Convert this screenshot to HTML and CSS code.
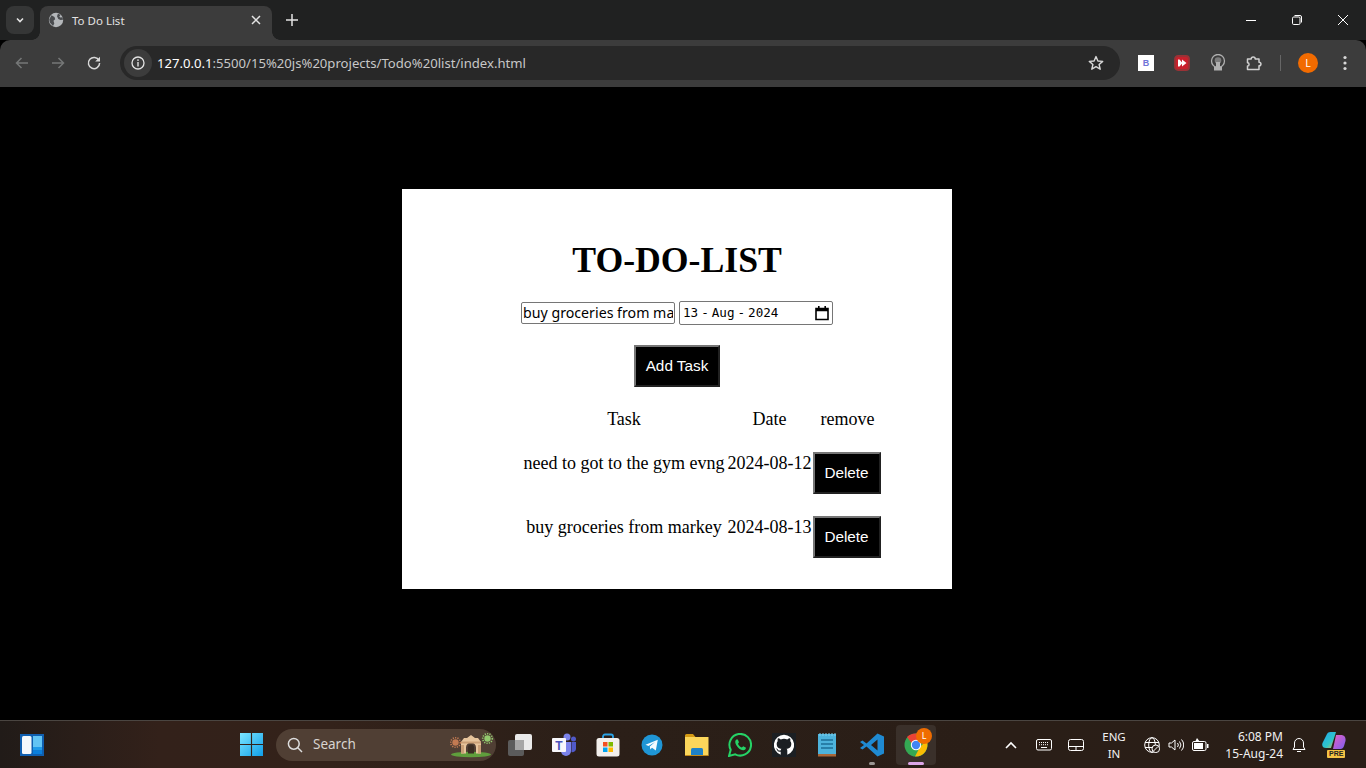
FILE: index.html
```html
<!DOCTYPE html>
<html lang="en">
<head>
<meta charset="utf-8">
<title>To Do List</title>
<link rel="stylesheet" href="styles.css">
</head>
<body>
<div class="browser">
  <header class="tabstrip">
    <button class="tab-menu" aria-label="Tabs"><svg width="10" height="10" viewBox="0 0 10 10"><path d="M2 3.500 5 6.500 8 3.500" fill="none" stroke="#e3e3e3" stroke-width="1.600"/></svg></button>
    <div class="tab">
      <svg class="favicon" width="16" height="16" viewBox="0 0 16 16"><circle cx="8" cy="8" r="7.200" fill="#b4b7ba"/><path d="M3.500 3.200 6.500 5 7.200 7.300 5.500 8.800 6.300 11.500 5 14 1.800 10.500 1.200 7.500ZM10 1.500 12.500 3 11.300 4.800 12.500 5.600 14.500 5.300 15 7.800 12.500 8 10.300 7 9 4.300Z" fill="#4a4c4f"/></svg>
      <span class="tab-title">To Do List</span>
      <svg class="tab-close" width="10" height="10" viewBox="0 0 10 10"><path d="M1 1 9 9M9 1 1 9" stroke="#e3e3e3" stroke-width="1.500"/></svg>
    </div>
    <svg class="new-tab" width="12" height="12" viewBox="0 0 12 12"><path d="M6 0V12M0 6H12" stroke="#e3e3e3" stroke-width="1.500"/></svg>
    <div class="win-controls">
      <svg width="10" height="10" viewBox="0 0 10 10"><path d="M0 5.500H10" stroke="#fff"/></svg>
      <svg width="10" height="10" viewBox="0 0 10 10"><rect x=".5" y="2" width="7.500" height="7.500" rx="1.200" fill="none" stroke="#fff"/><path d="M2.500 .5H8A1.500 1.500 0 0 1 9.500 2V7.500" fill="none" stroke="#fff"/></svg>
      <svg width="10" height="10" viewBox="0 0 10 10"><path d="M0 0 10 10M10 0 0 10" stroke="#fff"/></svg>
    </div>
  </header>
  <nav class="toolbar">
    <svg class="nav-icon" width="16" height="16" viewBox="0 0 16 16"><path d="M14 8H2.500M7.500 3 2.500 8 7.500 13" fill="none" stroke="#757777" stroke-width="1.500"/></svg>
    <svg class="nav-icon" width="16" height="16" viewBox="0 0 16 16"><path d="M2 8H13.500M8.500 3 13.500 8 8.500 13" fill="none" stroke="#757777" stroke-width="1.500"/></svg>
    <svg class="nav-icon" width="16" height="16" viewBox="0 0 16 16"><path d="M13 5.500A5.600 5.600 0 1 0 13.600 8" fill="none" stroke="#d8d8d8" stroke-width="1.500"/><path d="M14 1.800V6.600H9.200Z" fill="#d8d8d8"/></svg>
    <div class="omnibox">
      <span class="info-chip"><svg width="14" height="14" viewBox="0 0 14 14"><circle cx="7" cy="7" r="6" fill="none" stroke="#e3e3e3" stroke-width="1.300"/><path d="M7 6V10.400" stroke="#e3e3e3" stroke-width="1.400"/><circle cx="7" cy="4.100" r=".9" fill="#e3e3e3"/></svg></span>
      <span class="url"><span class="url-host">127.0.0.1</span>:5500/15%20js%20projects/Todo%20list/index.html</span>
      <svg class="star" width="16" height="16" viewBox="0 0 16 16"><path d="M8 1.600 9.900 6 14.700 6.400 11.100 9.500 12.200 14.200 8 11.700 3.800 14.200 4.900 9.500 1.300 6.400 6.100 6Z" fill="none" stroke="#d8d8d8" stroke-width="1.400" stroke-linejoin="round"/></svg>
    </div>
    <div class="ext-b"><span>B</span></div>
    <svg class="ext ext-red" width="16" height="16" viewBox="0 0 16 16"><rect x="1" y="1" width="14" height="14" rx="3" fill="#c9202c" stroke="#9a3236" stroke-width="1.800"/><path d="M4 4.500H5.500L8.500 8 5.500 11.500H4ZM8 4.500 12.500 8 8 11.500Z" fill="#fff"/></svg>
    <svg class="ext ext-bulb" width="16" height="18" viewBox="0 0 16 18"><circle cx="8" cy="7" r="6.500" fill="none" stroke="#b0b0b0" stroke-width="1.300"/><circle cx="8" cy="6.500" r="3.300" fill="#7c7c7c"/><path d="M6 8H10V12.500H12V16.500H4V12.500H6Z" fill="#b0b0b0"/></svg>
    <svg class="ext ext-puzzle" width="18" height="18" viewBox="0 0 18 18"><path d="M2.500 5H6.200C6.200 2.300 10.200 2.300 10.200 5H14V8.200C16.600 8.200 16.600 11.800 14 11.800V15.500H2.500V12C4.600 12 4.600 8.800 2.500 8.800Z" fill="none" stroke="#d0d0d0" stroke-width="1.500" stroke-linejoin="round"/></svg>
    <span class="tool-sep"></span>
    <span class="avatar">L</span>
    <svg class="dots" width="4" height="16" viewBox="0 0 4 16"><circle cx="2" cy="2.500" r="1.600" fill="#d8d8d8"/><circle cx="2" cy="8" r="1.600" fill="#d8d8d8"/><circle cx="2" cy="13.500" r="1.600" fill="#d8d8d8"/></svg>
  </nav>
  <main class="viewport">
    <section class="card">
      <h1>TO-DO-LIST</h1>
      <div class="inputs">
        <input class="task-input" type="text" value="buy groceries from markey">
        <div class="date-input"><span class="date-text"><span>13</span><i>-</i><span>Aug</span><i>-</i><span>2024</span></span>
          <svg width="14" height="16" viewBox="0 0 14 16"><path d="M1 3.500H13V14.500H1Z" fill="none" stroke="#000" stroke-width="1.600"/><path d="M1 3H13V6.300H1ZM3 1H4.600V3H3ZM9.400 1H11V3H9.400Z" fill="#000"/></svg>
        </div>
      </div>
      <button class="btn add-btn">Add Task</button>
      <table>
        <thead><tr><th>Task</th><th>Date</th><th>remove</th></tr></thead>
        <tbody>
          <tr><td>need to got to the gym evng</td><td>2024-08-12</td><td><button class="btn del-btn">Delete</button></td></tr>
          <tr><td>buy groceries from markey</td><td>2024-08-13</td><td><button class="btn del-btn">Delete</button></td></tr>
        </tbody>
      </table>
    </section>
  </main>
  <footer class="taskbar">
    <div class="tb-left">
      <svg width="26" height="24" viewBox="0 0 26 24"><rect x="1" y="1" width="24" height="22" fill="#0f5fb0"/><rect x="3" y="3" width="9.500" height="18" rx="1.500" fill="#f4f8fb"/><rect x="14" y="3" width="9" height="11" fill="#62c4f4"/><rect x="14" y="14" width="9" height="3.500" fill="#1f9bea"/><rect x="14" y="17.500" width="9" height="3.500" fill="#0a7fdc"/></svg>
    </div>
    <div class="tb-center">
      <svg class="win-logo" width="23" height="23" viewBox="0 0 24 24"><defs><linearGradient id="w" x1="0" y1="0" x2="1" y2="1"><stop offset="0" stop-color="#7ce6ff"/><stop offset="1" stop-color="#0f9ee8"/></linearGradient></defs><path d="M0 0H11.400V11.400H0ZM12.600 0H24V11.400H12.600ZM0 12.600H11.400V24H0ZM12.600 12.600H24V24H12.600Z" fill="url(#w)"/></svg>
      <div class="search">
        <svg width="16" height="16" viewBox="0 0 16 16"><circle cx="6.800" cy="6.800" r="5.400" fill="none" stroke="#ddd" stroke-width="1.500"/><path d="M10.800 10.800 15 15" stroke="#ddd" stroke-width="1.500"/></svg>
        <span class="search-label">Search</span>
        <svg class="gate" width="44" height="26" viewBox="0 0 44 26"><ellipse cx="21" cy="22.500" rx="20" ry="2.800" fill="#5f9e3c"/><path d="M11 10 14 6H17L21 3 25 6H28L31 10V21.500H26V15.500A5 5 0 0 0 16 15.500V21.500H11Z" fill="#e6c49c"/><path d="M11 9.500H31V11.500H11ZM11 13H14V21.500H11ZM28 13H31V21.500H28Z" fill="#c99f76"/><path d="M18 21.500V15.500A3 3 0 0 1 24 15.500V21.500Z" fill="#3a2c22"/><circle cx="5.500" cy="10.500" r="3.200" fill="#c37a52"/><circle cx="5.500" cy="10.500" r="4.800" fill="none" stroke="#c37a52" stroke-width="1.600" stroke-dasharray="1.200 1.200"/><circle cx="37.500" cy="6.500" r="3.200" fill="#92c96e"/><circle cx="37.500" cy="6.500" r="4.800" fill="none" stroke="#92c96e" stroke-width="1.600" stroke-dasharray="1.200 1.200"/></svg>
      </div>
      <div class="apps">
        <span class="app"><svg width="24" height="22" viewBox="0 0 24 22"><rect x="0" y="6" width="16" height="16" rx="2" fill="#5b5b5b"/><rect x="7" y="0" width="17" height="16" rx="2" fill="#e9e9e9"/><rect x="7" y="6" width="9" height="10" fill="#a5a5a5"/></svg></span>
        <span class="app"><svg width="26" height="24" viewBox="0 0 26 24"><circle cx="16" cy="4" r="3.500" fill="#7b83eb"/><circle cx="22.500" cy="6" r="2.500" fill="#5059c9"/><path d="M10 9H20V18A5 5 0 0 1 10 18Z" fill="#7b83eb"/><path d="M20.500 9H25V16A3.500 3.500 0 0 1 20.500 19Z" fill="#5059c9"/><rect x="1" y="5" width="14" height="14" rx="1" fill="#f7f7fb"/><text class="teams-t" x="8" y="16.500" text-anchor="middle">T</text></svg></span>
        <span class="app"><svg width="24" height="24" viewBox="0 0 24 24"><path d="M7 6V3.500A2 2 0 0 1 9 1.500H15A2 2 0 0 1 17 3.500V6" fill="none" stroke="#2aa4e8" stroke-width="1.800"/><rect x="0.500" y="5" width="23" height="18.500" rx="2.500" fill="#f2efec"/><rect x="7" y="9" width="4.500" height="4.500" fill="#f25022"/><rect x="12.500" y="9" width="4.500" height="4.500" fill="#7fba00"/><rect x="7" y="14.500" width="4.500" height="4.500" fill="#00a4ef"/><rect x="12.500" y="14.500" width="4.500" height="4.500" fill="#ffb900"/></svg></span>
        <span class="app"><svg width="22" height="22" viewBox="0 0 22 22"><circle cx="11" cy="11" r="10.500" fill="#1f96d6"/><path d="M4.500 10.800 16.800 5.800 14.800 16.500 11 13.800 9.300 15.500 8.800 12.600 14 8 7.500 11.900Z" fill="#f5fbff"/></svg></span>
        <span class="app"><svg width="25" height="22" viewBox="0 0 25 22"><path d="M1 1.500A1.500 1.500 0 0 1 2.500 0H9L11.500 3H1Z" fill="#d49a14"/><path d="M1 3H24.500V21A1 1 0 0 1 23.500 22H1Z" fill="#fbd65b"/><rect x="7" y="14" width="12" height="8" rx="1.500" fill="#1e82c8"/><rect x="1" y="21" width="23.500" height="1" fill="#c48a18"/></svg></span>
        <span class="app"><svg width="24" height="24" viewBox="0 0 24 24"><path d="M1 23 2.700 16.800A10.800 10.800 0 1 1 7.200 21.300Z" fill="none" stroke="#25d366" stroke-width="2"/><path d="M8.300 6.500C7 7.500 6.800 9.500 8.200 12 9.800 15 12.500 17 15 17.300 16.800 17.500 18 16 18 14.800L15.300 13.300 13.800 14.500C12.300 14 10.500 12.200 10 10.700L11 9.300 9.800 6.500Z" fill="#25d366"/></svg></span>
        <span class="app"><svg width="24" height="24" viewBox="0 0 24 24"><rect width="24" height="24" fill="#1b1f23"/><path d="M12 1.800A10.300 10.300 0 0 0 8.700 21.800V18.700C6 19.300 5.400 17.500 5.400 17.500 4.900 16.300 4.200 16 4.200 16 3.300 15.400 4.300 15.400 4.300 15.400 5.300 15.500 5.800 16.400 5.800 16.400 6.700 18 8.200 17.500 8.800 17.200 8.900 16.500 9.200 16.100 9.400 15.800 7.100 15.600 4.700 14.700 4.700 10.800 4.700 9.700 5.100 8.800 5.800 8.100 5.700 7.800 5.300 6.800 5.900 5.400 5.900 5.400 6.800 5.100 8.700 6.400A10 10 0 0 1 15.300 6.400C17.200 5.100 18.100 5.400 18.100 5.400 18.700 6.800 18.300 7.800 18.200 8.100 18.900 8.800 19.300 9.700 19.300 10.800 19.300 14.700 16.900 15.600 14.600 15.800 15 16.100 15.300 16.700 15.300 17.700V21.800A10.300 10.300 0 0 0 12 1.800Z" fill="#fff"/></svg></span>
        <span class="app"><svg width="20" height="24" viewBox="0 0 20 24"><rect x="0" y="1" width="18" height="22" fill="#4db3dc"/><rect x="0" y="21" width="18" height="2.500" fill="#a8683a"/><path d="M3 7H15M3 11H15M3 15H15" stroke="#1c6f97" stroke-width="1.500"/><path d="M2 0V3M5 0V3M8 0V3M11 0V3M14 0V3M17 0V3" stroke="#7fd0ee"/></svg></span>
        <span class="app app-vscode"><svg width="24" height="24" viewBox="0 0 24 24"><path d="M17.500 0.500 24 3.500V20.500L17.500 23.500 6.500 13.500 2.500 16.500 0 15 4 12 0 9 2.500 7.500 6.500 10.500ZM17.500 6.500 11 12 17.500 17.500Z" fill="#1f8ad2"/></svg><span class="running"></span></span>
        <span class="app app-chrome"><svg width="24" height="24" viewBox="0 0 24 24"><circle cx="12" cy="12" r="11.500" fill="#34a853"/><path d="M12 .5A11.500 11.500 0 0 1 22.500 7.500H12A4.500 4.500 0 0 0 7.800 10.500L3 4A11.500 11.500 0 0 1 12 .5Z" fill="#ea4335"/><path d="M22.500 7.500A11.500 11.500 0 0 1 11 23.500L16 14Z" fill="#fbbc04"/><circle cx="12" cy="12" r="5.200" fill="#fff"/><circle cx="12" cy="12" r="4.200" fill="#4285f4"/></svg><span class="chrome-badge">L</span><span class="active-bar"></span></span>
      </div>
    </div>
    <div class="tray">
      <svg class="t-chev" width="12" height="8" viewBox="0 0 12 8"><path d="M1 7 6 2 11 7" fill="none" stroke="#fff" stroke-width="1.600"/></svg>
      <svg class="t-key" width="16" height="12" viewBox="0 0 16 12"><rect x=".5" y=".5" width="15" height="10.500" rx="1.500" fill="none" stroke="#fff"/><path d="M3 3.500H13M3 5.700H13" stroke="#fff" stroke-dasharray="1 1"/><path d="M5 8.500H11" stroke="#fff"/></svg>
      <svg class="t-pad" width="16" height="12" viewBox="0 0 16 12"><rect x=".5" y=".5" width="15" height="11" rx="2" fill="none" stroke="#fff"/><path d="M.5 7.500H15.500M8 7.500V11.500" stroke="#fff"/></svg>
      <div class="t-lang">ENG<br>IN</div>
      <svg class="t-globe" width="16" height="16" viewBox="0 0 16 16"><circle cx="8" cy="8" r="7.300" fill="none" stroke="#fff"/><ellipse cx="8" cy="8" rx="3.300" ry="7.300" fill="none" stroke="#fff"/><path d="M1 5.500H15M1 10.500H10" stroke="#fff"/><circle cx="11.800" cy="11.800" r="3.800" fill="#2a1e17" stroke="#fff"/><path d="M9.500 14 14 9.500" stroke="#fff"/></svg>
      <svg class="t-vol" width="16" height="14" viewBox="0 0 16 14"><path d="M1 5H3.500L7 2V12L3.500 9H1Z" fill="none" stroke="#fff"/><path d="M9.500 5A3 3 0 0 1 9.500 9M11.500 3.500A5.500 5.500 0 0 1 11.500 10.500M13.500 1.500A8 8 0 0 1 13.500 12.500" fill="none" stroke="#fff"/></svg>
      <svg class="t-bat" width="17" height="14" viewBox="0 0 17 14"><rect x=".5" y="3.500" width="13.500" height="9" rx="1.500" fill="none" stroke="#fff"/><rect x="15" y="6" width="1.500" height="4" fill="#fff"/><rect x="2" y="5" width="9" height="6" fill="#fff"/><path d="M5 0 3 4H8Z" fill="#fff"/></svg>
      <div class="t-clock"><div>6:08 PM</div><div>15-Aug-24</div></div>
      <svg class="t-bell" width="14" height="16" viewBox="0 0 14 16"><path d="M1 12.500H13L11.500 10V6A4.500 4.500 0 0 0 2.500 6V10Z" fill="none" stroke="#fff" stroke-linejoin="round"/><path d="M5 14.500H9" stroke="#fff"/></svg>
      <div class="copilot"><svg width="24" height="20" viewBox="0 0 24 20"><defs><linearGradient id="c" x1="0" y1="0" x2="1" y2="1"><stop offset="0" stop-color="#1fa8f0"/><stop offset=".6" stop-color="#2fc4c8"/><stop offset="1" stop-color="#e8b840"/></linearGradient><linearGradient id="d" x1="0" y1="0" x2="1" y2="1"><stop offset="0" stop-color="#e85fc0"/><stop offset="1" stop-color="#7a5ff0"/></linearGradient></defs><path d="M5 2C6 0 8 0 10 0H14L9 16H4C1 16-.5 14 .5 11Z" fill="url(#c)"/><path d="M14 3H19C22 3 24 5 23.500 9L22 14C21 17 19 17 17 17H11Z" fill="url(#d)"/></svg><span class="pre">PRE</span></div>
    </div>
  </footer>
</div>
</body>
</html>
```

FILE: styles.css
```css
* { box-sizing: border-box; }
html, body { margin: 0; padding: 0; height: 100%; }
body { overflow: hidden; background: #000; }
.browser { width: 1366px; height: 768px; display: flex; flex-direction: column; font-family: "Noto Sans", sans-serif; }

.tabstrip { height: 40px; background: #202121; display: flex; align-items: flex-start; padding-top: 6px; flex: none; }
.tab-menu { width: 28px; height: 28px; margin-left: 6px; border: 0; padding: 0; border-radius: 8px; background: #353636; display: flex; align-items: center; justify-content: center; }
.tab { width: 232px; height: 34px; margin-left: 6px; background: #3c3c3c; border-radius: 8px 8px 0 0; display: flex; align-items: center; padding: 0 11px 6px 8px; position: relative; }
.tab::before, .tab::after { content: ""; position: absolute; bottom: 0; width: 8px; height: 8px; }
.tab::before { left: -8px; background: radial-gradient(circle at 0 0, #202121 7.500px, #3c3c3c 8px); }
.tab::after { right: -8px; background: radial-gradient(circle at 100% 0, #202121 7.500px, #3c3c3c 8px); }
.favicon { flex: none; }
.tab-title { font-size: 11.500px; color: #e3e3e3; margin-left: 8px; flex: 1; white-space: nowrap; }
.tab-close { flex: none; }
.new-tab { margin: 8px 0 0 14px; }
.win-controls { margin-left: auto; display: flex; gap: 36px; padding: 9px 18px 0 0; height: 30px; }

.toolbar { height: 47px; background: #3c3c3c; border-radius: 10px 10px 0 0; display: flex; align-items: center; padding: 0 14px 1px 14px; flex: none; position: relative; }
.nav-icon { margin-right: 20px; flex: none; }
.omnibox { width: 1000px; height: 34px; margin-left: -2px; background: #282828; border-radius: 17px; display: flex; align-items: center; padding: 0 16px 0 4px; }
.info-chip { width: 28px; height: 28px; border-radius: 50%; background: #3c3c3c; display: flex; align-items: center; justify-content: center; flex: none; }
.url { font-size: 13.120px; color: #c7c7c7; margin-left: 5px; white-space: nowrap; flex: 1; }
.url-host { color: #fff; }
.star { flex: none; }
.ext-b { width: 16px; height: 16px; background: #fff; margin-left: 18px; display: flex; align-items: center; justify-content: center; flex: none; }
.ext-b span { font: bold 9px "Liberation Sans", sans-serif; color: #6f74d8; }
.ext { flex: none; }
.ext-red { margin-left: 20px; }
.ext-bulb { margin-left: 20px; }
.ext-puzzle { margin-left: 19px; }
.tool-sep { width: 1px; height: 16px; background: #666; margin-left: 17px; flex: none; }
.avatar { width: 20px; height: 20px; border-radius: 50%; background: #f26b00; color: #fff; font-size: 10.500px; display: flex; align-items: center; justify-content: center; margin-left: 17px; flex: none; }
.dots { margin-left: 25px; flex: none; }

.viewport { flex: 1; background: #000; padding: 102px 0 0 402px; min-height: 0; }
.card { width: 550px; height: 400px; background: #fff; display: flex; flex-direction: column; align-items: center; padding-top: 50px; font-family: "Liberation Serif", serif; }
h1 { margin: 0 0 20px; font-size: 35.700px; line-height: 42px; font-weight: bold; color: #000; }
.inputs { display: flex; align-items: center; gap: 4px; height: 24px; }
.task-input { width: 154px; height: 22px; padding: 0 1px 2px; border: 1px solid #767676; border-radius: 2px; font: 14.200px "Noto Sans", sans-serif; color: #000; background: #fff; outline: 0; }
.date-input { width: 154px; height: 24px; border: 1px solid #767676; border-radius: 2px; display: flex; align-items: center; justify-content: space-between; padding: 0 3px; }
.date-text { font: 12.600px "DejaVu Sans Mono", monospace; color: #000; display: flex; padding-bottom: 2px; }
.date-text i { font-style: normal; padding: 0 3px; }
.btn { background: #000; color: #fff; font: 15.300px "Liberation Sans", sans-serif; border: 2px outset #767676; padding: 0 0 1px; height: 42px; display: block; }
.add-btn { width: 86px; margin-top: 20px; }
.del-btn { width: 68px; margin: 20px 0 0 -1px; }
table { border-collapse: separate; border-spacing: 2px; margin: 20px 0 0 50px; font-size: 18px; color: #000; }
th { font-weight: normal; padding: 0 1px 2px; text-align: center; height: 21px; line-height: 18px; }
td { padding: 0; text-align: center; vertical-align: middle; white-space: nowrap; }
thead th:first-child { width: 203px; }
thead th:nth-child(2) { width: 84px; }
thead th:nth-child(3) { width: 68px; }

.taskbar { height: 48px; flex: none; border-top: 1px solid #4a4541; background: linear-gradient(90deg, #211b18 0, #33211a 160px, #33221a 330px, #2b1f18 600px, #2a1e17 1000px, #291e17 100%); display: flex; align-items: center; color: #f2f2f2; }
.tb-left { width: 240px; padding-left: 19px; flex: none; display: flex; }
.tb-center { display: flex; align-items: center; flex: none; }
.win-logo { flex: none; }
.search { width: 220px; height: 32px; margin-left: 13px; background: #503f34; border-radius: 16px; display: flex; align-items: center; padding: 0 2px 0 11px; }
.search-label { font-size: 13.500px; color: #d8d4d0; margin-left: 10px; flex: 1; padding-bottom: 2px; }
.apps { display: flex; margin-left: 2px; }
.app { width: 44px; height: 40px; display: flex; align-items: center; justify-content: center; position: relative; flex: none; }
.teams-t { font: bold 12px "Liberation Sans", sans-serif; fill: #4b53bc; }
.running { position: absolute; left: 19px; bottom: 0; width: 6px; height: 3px; border-radius: 2px; background: #9b9794; }
.app-chrome { background: #3a302a; border-radius: 4px; width: 40px; margin-left: 2px; }
.chrome-badge { position: absolute; top: 3px; left: 20px; width: 16px; height: 16px; border-radius: 50%; background: #ef6c00; color: #fff; font-size: 9px; display: flex; align-items: center; justify-content: center; }
.active-bar { position: absolute; left: 12px; bottom: 0; width: 16px; height: 3px; border-radius: 2px; background: #dca6e8; }
.tray { margin-left: auto; display: flex; align-items: center; height: 100%; flex: none; font-size: 12px; }
.t-chev { margin-right: 19px; }
.t-key { margin-right: 16px; }
.t-pad { margin-right: 0; }
.t-lang { width: 60px; text-align: center; line-height: 17px; font-size: 11.500px; }
.t-vol { margin-left: 8px; }
.t-bat { margin-left: 8px; }
.t-clock { width: 74px; text-align: right; line-height: 17px; font-size: 12px; }
.t-bell { margin-left: 9px; }
.copilot { width: 26px; height: 26px; margin: 0 18px 0 16px; position: relative; }
.pre { position: absolute; left: 5px; bottom: 0; background: #f6c344; color: #222; font: bold 7px "Liberation Sans", sans-serif; padding: 0 2px; border-radius: 1px; line-height: 8px; }
```
